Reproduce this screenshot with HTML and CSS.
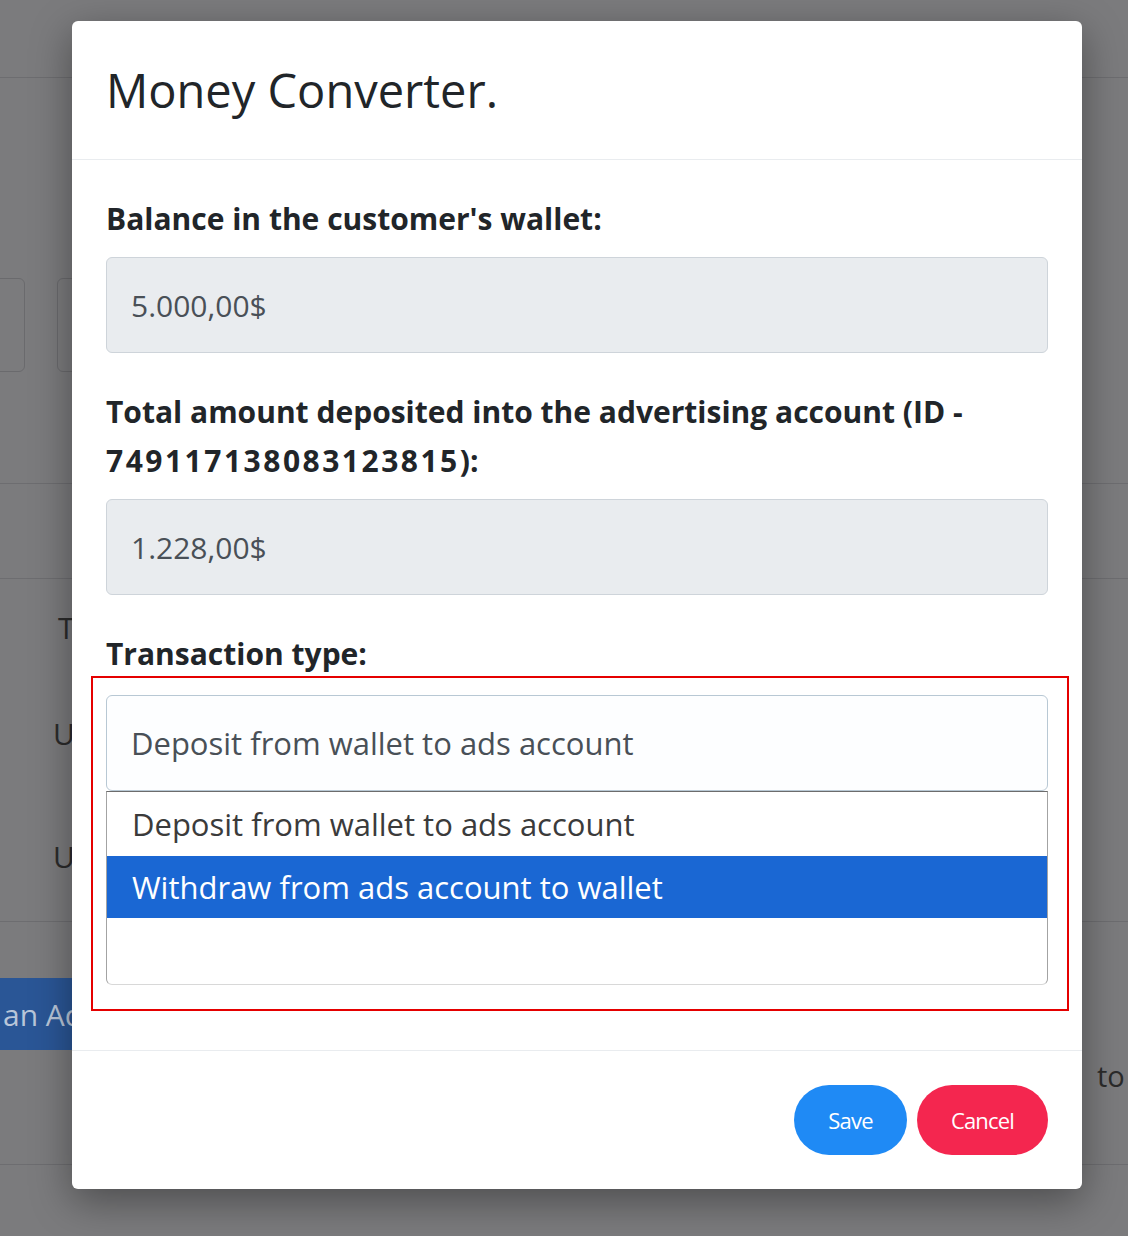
FILE: index.html
```html
<!DOCTYPE html>
<html lang="en">
<head>
<meta charset="utf-8">
<title>Money Converter</title>
<link rel="stylesheet" href="styles.css">
</head>
<body>
<div class="page">
  <div class="bg-top"></div>
  <div class="bg-filters">
    <div class="bg-box bg-box-a"></div>
    <div class="bg-box bg-box-b"></div>
  </div>
  <div class="bg-band"></div>
  <div class="bg-rows">
    <div class="bg-row bg-row-1">T</div>
    <div class="bg-row bg-row-2">U</div>
    <div class="bg-row bg-row-3">U</div>
  </div>
  <div class="bg-actions"><span class="bg-btn">an Ad Account</span></div>
  <div class="bg-foot"><span class="bg-to">to</span></div>
</div>

<div class="modal">
  <div class="modal-header">
    <h1 class="modal-title">Money Converter.</h1>
  </div>
  <div class="modal-body">
    <div class="field">
      <div class="field-label">Balance in the customer's wallet:</div>
      <div class="input">5.000,00$</div>
    </div>
    <div class="field">
      <div class="field-label">Total amount deposited into the advertising account (ID - <span class="num">749117138083123815</span>):</div>
      <div class="input">1.228,00$</div>
    </div>
    <div class="field field-last">
      <div class="field-label">Transaction type:</div>
      <div class="select">Deposit from wallet to ads account</div>
      <div class="listbox">
        <div class="option">Deposit from wallet to ads account</div>
        <div class="option option-selected">Withdraw from ads account to wallet</div>
      </div>
    </div>
  </div>
  <div class="modal-footer">
    <button class="btn btn-save">Save</button>
    <button class="btn btn-cancel">Cancel</button>
  </div>
  <div class="annot"></div>
</div>
</body>
</html>
```

FILE: styles.css
```css
html, body {
  margin: 0;
  padding: 0;
}
body {
  width: 1128px;
  height: 1236px;
  overflow: hidden;
  background: #7b7b7d;
  font-family: "Open Sans", "Noto Sans", sans-serif;
  position: relative;
}

/* ---------- page behind the backdrop ---------- */
.page {
  width: 1128px;
  color: #2b2b2b;
}
.bg-top {
  height: 77px;
  border-bottom: 1px solid #6d6d70;
}
.bg-filters {
  display: flex;
  gap: 32px;
  padding-top: 200px;
  box-sizing: border-box;
  height: 406px;
  border-bottom: 1px solid #6d6d70;
}
.bg-box {
  height: 94px;
  border: 1px solid #6a6a6d;
  border-radius: 6px;
  box-sizing: border-box;
}
.bg-box-a {
  width: 125px;
  margin-left: -100px;
}
.bg-box-b {
  width: 300px;
}
.bg-band {
  height: 94px;
  border-bottom: 1px solid #6d6d70;
}
.bg-rows {
  border-bottom: 1px solid #6d6d70;
  font-size: 30px;
}
.bg-row {
  display: flex;
  align-items: center;
}
.bg-row-1 { height: 96px; padding-left: 58px; }
.bg-row-2 { height: 116px; padding-left: 53px; }
.bg-row-3 { height: 130px; padding-left: 53px; }
.bg-actions {
  height: 128px;
  padding-top: 56px;
  box-sizing: border-box;
}
.bg-btn {
  display: inline-flex;
  align-items: center;
  height: 72px;
  padding: 0 20px 0 3px;
  background: #2a5696;
  color: #b9c6d9;
  font-size: 30px;
  white-space: nowrap;
}
.bg-foot {
  height: 115px;
  border-bottom: 1px solid #6d6d70;
  padding: 6px 0 0 1097px;
  box-sizing: border-box;
  font-size: 29px;
  line-height: 40px;
  white-space: nowrap;
}

/* ---------- modal ---------- */
.modal {
  position: absolute;
  left: 72px;
  top: 21px;
  width: 1010px;
  height: 1168px;
  background: #ffffff;
  border-radius: 6px;
  box-shadow: 0 12px 40px rgba(0, 0, 0, 0.38);
  display: flex;
  flex-direction: column;
  color: #212529;
}
.modal-header {
  height: 139px;
  box-sizing: border-box;
  border-bottom: 1px solid #e9ecef;
  display: flex;
  align-items: center;
  padding: 0 34px;
}
.modal-title {
  margin: 0;
  font-size: 47px;
  font-weight: 400;
  line-height: 1.2;
  color: #212529;
}
.modal-body {
  flex: 1;
  padding: 34px 34px 0;
}
.field {
  margin-bottom: 34px;
}
.field-last {
  margin-bottom: 0;
}
.field-label {
  font-size: 30px;
  font-weight: 700;
  line-height: 49px;
  margin-bottom: 14px;
  color: #212529;
}
.field-last .field-label {
  margin-bottom: 17px;
}
.num {
  letter-spacing: 2.5px;
}
.input {
  height: 96px;
  box-sizing: border-box;
  background: #e9ecef;
  border: 1px solid #ced4da;
  border-radius: 6px;
  padding: 0 24px;
  display: flex;
  align-items: center;
  font-size: 30px;
  color: #495057;
}
.select {
  height: 96px;
  box-sizing: border-box;
  background: #fdfeff;
  border: 1px solid #b8c8d4;
  border-radius: 6px;
  padding: 0 24px;
  display: flex;
  align-items: center;
  font-size: 31px;
  color: #495057;
}
.listbox {
  height: 194px;
  box-sizing: border-box;
  border: 1px solid #a3a3a3;
  border-top-color: #6c6c6c;
  border-bottom-color: #d8d8d8;
  border-radius: 0 0 6px 6px;
  background: #ffffff;
}
.option {
  height: 64px;
  display: flex;
  align-items: center;
  padding-left: 25px;
  font-size: 31px;
  color: #3b3b3b;
}
.option-selected {
  height: 62px;
  background: #1a67d3;
  color: #ffffff;
}
.modal-footer {
  height: 139px;
  box-sizing: border-box;
  border-top: 1px solid #e9ecef;
  display: flex;
  justify-content: flex-end;
  align-items: center;
  gap: 10px;
  padding: 0 34px;
}
.btn {
  height: 70px;
  border: none;
  border-radius: 35px;
  color: #ffffff;
  font-family: "Open Sans", "Noto Sans", sans-serif;
  font-size: 22px;
  letter-spacing: -0.8px;
  padding: 0;
  display: flex;
  align-items: center;
  justify-content: center;
}
.btn-save {
  width: 113px;
  background: #1f8af5;
}
.btn-cancel {
  width: 131px;
  background: #f4264f;
}

/* red annotation frame drawn over the dropdown */
.annot {
  position: absolute;
  left: 19px;
  top: 655px;
  width: 978px;
  height: 335px;
  box-sizing: border-box;
  border: 2px solid #e50000;
  pointer-events: none;
}
```
